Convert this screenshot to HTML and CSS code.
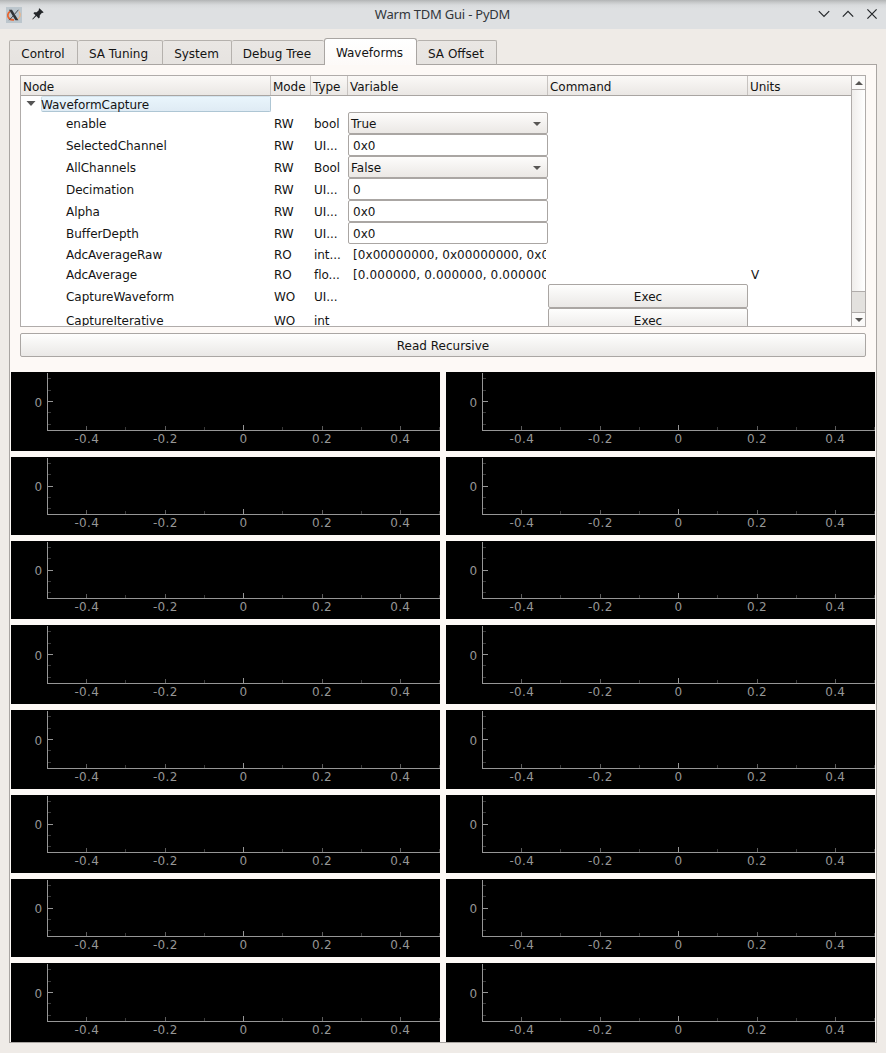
FILE: index.html
```html
<!DOCTYPE html>
<html lang="en">
<head>
<meta charset="utf-8">
<title>Warm TDM Gui - PyDM</title>
<link rel="stylesheet" href="styles.css">
</head>
<body>
<header class="titlebar">
  <svg class="app-icon" width="16" height="16" viewBox="0 0 16 16">
    <rect width="16" height="16" fill="#bcc6cd"/>
    <path d="M4 4.5C1.5 6 1 9.5 3.2 11.5C4.5 12.7 6 13 8 12.8" fill="none" stroke="#e8622c" stroke-width="1.7"/>
    <path d="M10 12.5C14 11.5 15.5 8 13 4.5" fill="none" stroke="#e9b48a" stroke-width="1.3"/>
    <path d="M3 2.8H6L12.4 13.2H9.4Z" fill="#303336"/>
    <path d="M12.4 2.8L8.6 7.2M7 9L3.2 13.2" stroke="#4a4d50" stroke-width="1"/>
  </svg>
  <svg class="pin-icon" width="12" height="12" viewBox="0 0 12 12">
    <path d="M7.4.3L11.6 4.2L10.8 5L10 4.8L7.8 7.2L7.7 9.6L6.7 10.4L4.4 8.1L.8 11.5L.3 11.1L3.5 7.3L1.4 5.2L2.3 4.2L4.7 4.2L7 2L6.7 1Z" fill="#232629"/>
  </svg>
  <span class="caption">Warm TDM Gui - PyDM</span>
  <div class="window-buttons">
    <svg width="12" height="12" viewBox="0 0 12 12"><path d="M.8 3.2L6 8.4L11.2 3.2"/></svg>
    <svg width="12" height="12" viewBox="0 0 12 12"><path d="M.8 8.6L6 3.4L11.2 8.6"/></svg>
    <svg width="12" height="12" viewBox="0 0 12 12"><path d="M1.4 1.4L10.6 10.6M10.6 1.4L1.4 10.6"/></svg>
  </div>
</header>
<main class="content">
  <nav class="tabs">
    <div class="tab t-control">Control</div>
    <div class="tab t-tuning">SA Tuning</div>
    <div class="tab t-system">System</div>
    <div class="tab t-debug">Debug Tree</div>
    <div class="tab selected">Waveforms</div>
    <div class="tab t-offset">SA Offset</div>
  </nav>
  <section class="panel">
    <div class="tree">
      <div class="tree-main">
        <div class="row head"><span>Node</span><span>Mode</span><span>Type</span><span>Variable</span><span>Command</span><span>Units</span></div>
        <div class="row root"><div class="branch"><svg width="10" height="6" viewBox="0 0 10 6"><path d="M0.5 0H9.5L5 5Z" fill="#555"/></svg><span class="current">WaveformCapture</span></div></div>
        <div class="row"><span class="name">enable</span><span>RW</span><span>bool</span><div class="combo">True<i class="down"></i></div></div>
        <div class="row"><span class="name">SelectedChannel</span><span>RW</span><span>UI...</span><div class="edit">0x0</div></div>
        <div class="row"><span class="name">AllChannels</span><span>RW</span><span>Bool</span><div class="combo">False<i class="down"></i></div></div>
        <div class="row"><span class="name">Decimation</span><span>RW</span><span>UI...</span><div class="edit">0</div></div>
        <div class="row"><span class="name">Alpha</span><span>RW</span><span>UI...</span><div class="edit">0x0</div></div>
        <div class="row"><span class="name">BufferDepth</span><span>RW</span><span>UI...</span><div class="edit">0x0</div></div>
        <div class="row short"><span class="name">AdcAverageRaw</span><span>RO</span><span>int...</span><div class="label">[0x00000000, 0x00000000, 0x0</div></div>
        <div class="row short"><span class="name">AdcAverage</span><span>RO</span><span>flo...</span><div class="label floats">[0.000000, 0.000000, 0.000000</div><span></span><span>V</span></div>
        <div class="row tall"><span class="name">CaptureWaveform</span><span>WO</span><span>UI...</span><span></span><div class="button">Exec</div></div>
        <div class="row tall"><span class="name">CaptureIterative</span><span>WO</span><span>int</span><span></span><div class="button">Exec</div></div>
      </div>
      <div class="scrollbar">
        <div class="arrow"><i class="up"></i></div>
        <div class="thumb"></div>
        <div class="groove"></div>
        <div class="arrow"><i class="down"></i></div>
      </div>
    </div>
    <div class="button read">Read Recursive</div>
    <div class="plots" id="plots"></div>
  </section>
</main>
<script src="plots.js"></script>
</body>
</html>
```
FILE: styles.css
```css
* { box-sizing: border-box; }
body {
  margin: 0;
  width: 886px;
  height: 1053px;
  overflow: hidden;
  background: #efebe7;
  color: #141414;
  font: 12px/14px "DejaVu Sans", sans-serif;
}
svg { display: block; }

.titlebar {
  display: grid;
  grid-template-columns: 16px 22px 1fr auto;
  align-items: center;
  height: 29px;
  padding: 0 8px 0 6px;
  background: linear-gradient(#b2b4b5 0, #c4c6c7 2px, #d8dadc 5px, #dee0e2 9px);
}
.pin-icon { margin-left: 10px; margin-top: -2px; }
.caption {
  padding-left: 23px;
  text-align: center;
  font: 13px/18px "Noto Sans", sans-serif;
  letter-spacing: -0.22px;
  margin-top: -1px;
  color: #31363b;
}
.window-buttons { display: flex; gap: 12px; margin-top: -1px; }
.window-buttons path { fill: none; stroke: #232629; stroke-width: 1.2; }

.content { padding: 9px 9px 0; }
.tabs { display: flex; align-items: flex-end; height: 27px; }
.tab {
  display: flex;
  align-items: center;
  justify-content: center;
  height: 25px;
  padding: 2px 1px 0 0;
  border-top: 1px solid #b5b1ad;
  border-right: 1px solid #b5b1ad;
  border-bottom: 1px solid #a9a5a2;
  border-radius: 2px 2px 0 0;
  background: linear-gradient(#eae7e4, #e6e3e0);
}
.t-control { width: 69px; border-left: 1px solid #b5b1ad; }
.t-tuning { width: 85px; padding-right: 3px; }
.t-system { width: 69px; }
.t-debug { width: 92px; border-right: 0; padding-right: 2px; }
.t-offset { width: 80px; }
.tab.selected {
  position: relative;
  width: 93px;
  height: 27px;
  padding: 1px 2px 0 0;
  border: 1px solid #a9a5a2;
  border-bottom: 0;
  border-radius: 3px 3px 0 0;
  background: linear-gradient(#fff, #fdfaf8);
}
.panel {
  margin-top: -1px;
  width: 868px;
  height: 979px;
  padding: 10px 1px 0;
  border: 1px solid #a9a5a2;
  background: #fdf9f6;
}

.tree {
  display: flex;
  width: 846px;
  height: 252px;
  margin-left: 9px;
  border: 1px solid #b0acaa;
  background: #fff;
}
.tree-main { width: 830px; height: 250px; overflow: hidden; }
.row {
  display: grid;
  grid-template-columns: 250px 40px 37px 200px 200px 103px;
  height: 22px;
  align-items: center;
  white-space: nowrap;
}
.row > span { padding: 1px 0 0 3px; letter-spacing: -0.04px; }
.row .name { padding-left: 45px; }
.row.head {
  height: 20px;
  border-bottom: 1px solid #a9a5a2;
  background: linear-gradient(#fbf9f7, #eae7e4);
}
.head > span {
  height: 19px;
  padding: 4px 0 0 2px;
  border-right: 1px solid #c7c3c0;
}
.head > span:last-child { border-right: 0; }
.row.root { height: 16px; }
.branch { display: flex; align-items: center; padding-left: 5px; }
.current {
  flex: 1;
  height: 16px;
  margin-left: 5px;
  padding-top: 1px;
  text-indent: -1px;
  border: 1px solid #aec6d4;
  border-top-color: #d4e4ee;
  border-left-color: #c8dce8;
  border-radius: 2px;
  background: linear-gradient(#e9f5fc, #dfebf4);
  letter-spacing: -0.04px;
}
.row.short { height: 20px; }
.row.tall { height: 24px; }
.combo, .edit, .button {
  display: flex;
  align-items: center;
  height: 22px;
  border: 1px solid #aaa6a3;
  border-radius: 2px;
}
.combo {
  justify-content: space-between;
  padding: 1px 6px 0 2px;
  background: linear-gradient(#fdfcfb, #ebe8e5);
}
.edit { padding: 1px 4px 0; background: #fff; }
.label {
  margin: 1px 2px 0 5px;
  overflow: hidden;
  letter-spacing: 0.08px;
}
.floats { letter-spacing: 0.15px; }
.button {
  justify-content: center;
  height: 24px;
  padding-top: 1px;
  background: linear-gradient(#fefefd, #eae8e6);
}
.up, .down { border: solid transparent; border-width: 0 4px; }
.down { border-top: 4px solid #585654; }
.up { border-bottom: 4px solid #585654; }

.scrollbar {
  display: flex;
  flex-direction: column;
  width: 14px;
  border-left: 1px solid #b0acaa;
  background: #fbfaf9;
}
.arrow { display: flex; align-items: center; justify-content: center; height: 13px; }
.thumb {
  height: 203px;
  border: solid #b0acaa;
  border-width: 1px 0;
  background: linear-gradient(90deg, #efedeb, #fff);
}
.groove { flex: 1; border-bottom: 1px solid #b0acaa; background: #e3e1de; }

.read { width: 846px; margin: 6px 0 0 9px; }
.plots {
  display: grid;
  grid-template-columns: 429px 429px;
  grid-template-rows: 79px 78px 78px 79px 79px 78px 78px 79px;
  gap: 6px;
  margin: 15px 0 0;
}
.plot { background: #000; shape-rendering: crispEdges; }
.plot text {
  font: 12px "DejaVu Sans", sans-serif;
  letter-spacing: 0.3px;
  fill: #969696;
}
.axis { fill: #969696; }
.mid { fill: #5c5c5c; }
.minor { fill: #393939; }
```
FILE: plots.js
```js
// Draws the empty channel plots: a left axis and a bottom axis with ticks.
const heights = [79, 78, 78, 79, 79, 78, 78, 79];
const rect = (c, x, y, w, h) =>
  `<rect class="${c}" x="${x}" y="${y}" width="${w}" height="${h}"/>`;
const text = (x, y, anchor, s) =>
  `<text x="${x}" y="${y}" text-anchor="${anchor}">${s}</text>`;

function plot(h) {
  const base = h - 21;
  let s = rect('axis', 36, 1, 1, base) + rect('axis', 36, base, 393, 1);
  for (const x of [114, 193, 271, 350, 428]) s += rect('minor', x, base - 3, 1, 3);
  for (const x of [75, 154, 311, 389]) s += rect('mid', x, base - 4, 1, 4);
  s += rect('axis', 232, base - 5, 1, 5) + rect('axis', 37, 29, 5, 1);
  for (const y of [6, base - 40, 40, base - 6]) s += rect('minor', 37, y, 3, 1);
  s += text(31.5, base - 23, 'end', '0');
  for (const [x, t] of [[75.8, '-0.4'], [154.3, '-0.2'], [232.5, '0'], [311, '0.2'], [389.3, '0.4']])
    s += text(x, base + 13, 'middle', t);
  return `<svg class="plot" width="429" height="${h}">${s}</svg>`;
}

document.getElementById('plots').innerHTML =
  heights.map(h => plot(h) + plot(h)).join('');
```
